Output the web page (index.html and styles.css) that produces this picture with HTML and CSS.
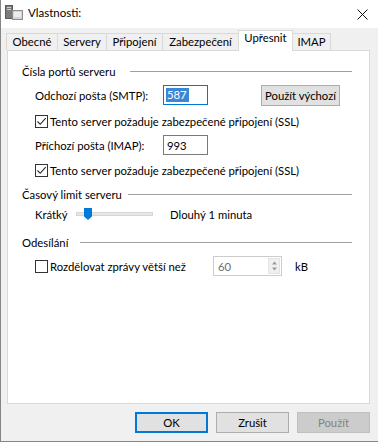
FILE: index.html
```html
<!DOCTYPE html>
<html lang="cs">
<head>
<meta charset="utf-8">
<title>Vlastnosti</title>
<link rel="stylesheet" href="styles.css">
</head>
<body>
<div class="window">
  <header class="titlebar">
    <svg class="appicon" width="18" height="17" viewBox="0 0 18 17">
      <rect x="0.5" y="1.5" width="7" height="13" fill="#7b7b7b" stroke="#5a5a5a"/>
      <rect x="2" y="3" width="4" height="1" fill="#cfcfcf"/>
      <rect x="2" y="5" width="4" height="1" fill="#cfcfcf"/>
      <rect x="7.5" y="6.5" width="10" height="9" fill="#d4d4d4" stroke="#8c8c8c"/>
      <rect x="9" y="8" width="7" height="5" fill="#ececec"/>
    </svg>
    <span class="title">Vlastnosti:</span>
    <svg class="close" width="11" height="11" viewBox="0 0 11 11">
      <path d="M0.5 0.5 L10.5 10.5 M10.5 0.5 L0.5 10.5" stroke="#111" stroke-width="1" fill="none"/>
    </svg>
  </header>

  <main class="body">
    <nav class="tabs">
      <div class="tab tab-obecne">Obecné</div>
      <div class="tab tab-servery">Servery</div>
      <div class="tab tab-pripojeni">Připojení</div>
      <div class="tab tab-zabezpeceni">Zabezpečení</div>
      <div class="tab tab-upresnit active">Upřesnit</div>
      <div class="tab tab-imap">IMAP</div>
    </nav>

    <section class="panel">
      <div class="group-head head-porty">
        <span class="head-label">Čísla portů serveru</span>
        <span class="rule"></span>
      </div>

      <div class="row row-smtp">
        <span class="field-label">Odchozí pošta (SMTP):</span>
        <div class="textbox focused"><span class="selected-text">587</span></div>
        <button class="btn btn-default-ports">Použít výchozí</button>
      </div>

      <div class="row row-check">
        <span class="checkbox checked">
          <svg width="11" height="11" viewBox="0 0 11 11"><path d="M1.5 5.5 L4.2 8.3 L9.7 2.2" stroke="#222" stroke-width="1.1" fill="none"/></svg>
        </span>
        <span class="check-label">Tento server požaduje zabezpečené připojení (SSL)</span>
      </div>

      <div class="row row-imap">
        <span class="field-label">Příchozí pošta (IMAP):</span>
        <div class="textbox"><span class="plain-text">993</span></div>
      </div>

      <div class="row row-check2">
        <span class="checkbox checked">
          <svg width="11" height="11" viewBox="0 0 11 11"><path d="M1.5 5.5 L4.2 8.3 L9.7 2.2" stroke="#222" stroke-width="1.1" fill="none"/></svg>
        </span>
        <span class="check-label">Tento server požaduje zabezpečené připojení (SSL)</span>
      </div>

      <div class="group-head head-limit">
        <span class="head-label">Časový limit serveru</span>
        <span class="rule"></span>
      </div>

      <div class="row row-slider">
        <span class="slider-min">Krátký</span>
        <div class="slider">
          <span class="track"></span>
          <span class="thumb"></span>
        </div>
        <span class="slider-max">Dlouhý 1 minuta</span>
      </div>

      <div class="group-head head-odesilani">
        <span class="head-label">Odesílání</span>
        <span class="rule"></span>
      </div>

      <div class="row row-split">
        <span class="checkbox"></span>
        <span class="check-label split-label">Rozdělovat zprávy větší než</span>
        <div class="spinbox">
          <span class="spin-value">60</span>
          <span class="spin-arrows">
            <svg width="7" height="12" viewBox="0 0 7 12">
              <path d="M3.5 1.5 L6 4.5 L1 4.5 Z" fill="#9a9a9a"/>
              <path d="M1 7.5 L6 7.5 L3.5 10.5 Z" fill="#9a9a9a"/>
            </svg>
          </span>
        </div>
        <span class="unit">kB</span>
      </div>
    </section>

    <footer class="actions">
      <button class="btn btn-action btn-ok">OK</button>
      <button class="btn btn-action">Zrušit</button>
      <button class="btn btn-action btn-disabled">Použít</button>
    </footer>
  </main>
</div>
</body>
</html>
```
FILE: styles.css
```css
* { box-sizing: border-box; }

body {
  margin: 0;
  background: #f0f0f0;
  font-family: Lato, "Liberation Sans", sans-serif;
  font-size: 11.3px;
  color: #000;
}

.window {
  width: 378px;
  height: 442px;
  background: #f0f0f0;
  border-left: 1px solid #858585;
  border-bottom: 1px solid #858585;
  display: flex;
  flex-direction: column;
}

/* title bar */
.titlebar {
  height: 28px;
  background: #fff;
  display: flex;
  align-items: center;
  padding: 0 0 3px 4px;
}
.appicon { flex: none; }
.title {
  margin-left: 5px;
  font-size: 11.5px;
}
.close {
  margin-left: auto;
  margin-right: 10px;
  margin-top: 3px;
}

/* body */
.body {
  flex: 1;
  padding: 2px 0 0 5px;
  display: flex;
  flex-direction: column;
}

.tabs {
  display: flex;
  align-items: flex-end;
  height: 20px;
}
.tab {
  height: 17px;
  border: 1px solid #d9d9d9;
  border-bottom: none;
  background: #f0f0f0;
  text-align: center;
  line-height: 15px;
  margin-left: -1px;
  white-space: nowrap;
}
.tab-obecne { width: 52px; margin-left: 0; }
.tab-servery { width: 50px; }
.tab-pripojeni { width: 57px; }
.tab-zabezpeceni { width: 77px; }
.tab-upresnit { width: 55px; }
.tab-imap { width: 39px; }
.tab.active {
  height: 21px;
  margin-bottom: -1px;
  background: #fff;
  line-height: 14px;
  position: relative;
  z-index: 1;
}

.panel {
  margin-left: 1px;
  width: 363px;
  height: 354px;
  background: #fff;
  border: 1px solid #d9d9d9;
  padding: 0 17px 0 14px;
  display: flex;
  flex-direction: column;
}

.group-head {
  display: flex;
  align-items: center;
  height: 20px;
}
.head-label { flex: none; white-space: nowrap; }
.head-porty { margin-top: 10px; }
.head-porty .head-label { width: 108px; }
.head-limit { margin-top: 4px; }
.head-limit .head-label { width: 106px; }
.head-odesilani { margin-top: 8px; }
.head-odesilani .head-label { width: 58px; }
.rule {
  flex: 1;
  height: 1px;
  background: #a0a0a0;
}

.row {
  display: flex;
  align-items: center;
  height: 20px;
  padding-left: 13px;
  white-space: nowrap;
}
.row-smtp { margin-top: 3px; height: 22px; }
.row-check { margin-top: 5px; }
.row-imap { margin-top: 4px; }
.row-check2 { margin-top: 5px; }
.row-slider { margin-top: 0; }
.row-split { margin-top: 4px; }

.field-label { width: 128px; flex: none; }

.textbox {
  width: 45px;
  height: 20px;
  border: 1px solid #7a7a7a;
  background: #fff;
  display: flex;
  align-items: center;
  padding-left: 2px;
}
.textbox.focused { border-color: #0078d7; }
.selected-text {
  background: #3a87d6;
  color: #fff;
  padding: 0 2px 0 1px;
  line-height: 14px;
}
.plain-text { padding-left: 1px; }

.btn {
  font-family: inherit;
  font-size: 11.3px;
  color: #000;
  background: #e1e1e1;
  border: 1px solid #adadad;
  padding: 0;
  margin: 0;
}
.btn-default-ports {
  margin-left: 53px;
  width: 79px;
  height: 21px;
}

.checkbox {
  flex: none;
  width: 13px;
  height: 13px;
  border: 1px solid #333;
  background: #fff;
  display: flex;
  align-items: center;
  justify-content: center;
}
.check-label { margin-left: 2px; }
.split-label { width: 163px; flex: none; }

.slider-min { width: 41px; flex: none; }
.slider {
  position: relative;
  width: 77px;
  height: 20px;
  display: flex;
  align-items: center;
}
.track {
  width: 100%;
  height: 4px;
  background: #e7e7e7;
  border: 1px solid #d6d6d6;
}
.thumb {
  position: absolute;
  left: 8px;
  top: 4px;
  width: 8px;
  height: 12px;
  background: #007ad9;
  clip-path: polygon(0 0, 100% 0, 100% 70%, 50% 100%, 0 70%);
}
.slider-max { margin-left: 17px; }

.spinbox {
  width: 69px;
  height: 20px;
  border: 1px solid #cccccc;
  background: #fff;
  display: flex;
  align-items: center;
  padding-left: 4px;
}
.spin-value { color: #6d6d6d; flex: 1; }
.spin-arrows {
  width: 12px;
  height: 16px;
  margin-right: 1px;
  background: #f0f0f0;
  border: 1px solid #e3e3e3;
  display: flex;
  align-items: center;
  justify-content: center;
}
.unit { margin-left: 13px; }

.actions {
  margin-top: 8px;
  display: flex;
  justify-content: flex-end;
  gap: 8px;
  padding-right: 8px;
}
.btn-action {
  width: 73px;
  height: 21px;
}
.btn-ok {
  border-color: #0078d7;
  box-shadow: inset 0 0 0 1px #0078d7;
}
.btn-disabled {
  background: #cccccc;
  border-color: #bfbfbf;
  color: #838383;
}
```
